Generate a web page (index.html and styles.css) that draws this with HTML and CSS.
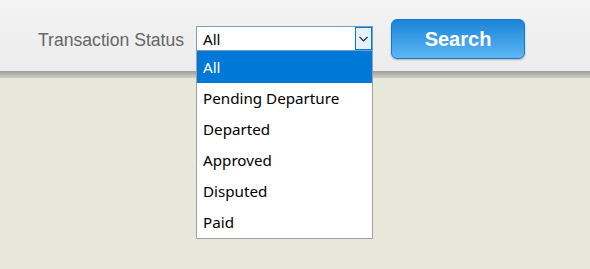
FILE: index.html
```html
<!DOCTYPE html>
<html lang="en">
<head>
    <meta charset="UTF-8">
    <meta name="viewport" content="width=device-width, initial-scale=1.0">
    <title>Transactions</title>
    <link rel="stylesheet" href="styles.css">
</head>
<body>
    <div class="toolbar">
        <label class="field-label">Transaction Status</label>
        <div class="select">
            <span class="select-value">All</span>
            <span class="select-arrow">
                <svg width="9" height="6" viewBox="0 0 9 6"><path d="M0.5 0.8 L4.5 4.8 L8.5 0.8" fill="none" stroke="#222" stroke-width="1.2"/></svg>
            </span>
            <ul class="options">
                <li class="selected">All</li>
                <li>Pending Departure</li>
                <li>Departed</li>
                <li>Approved</li>
                <li>Disputed</li>
                <li>Paid</li>
            </ul>
        </div>
        <button class="search-btn">Search</button>
    </div>
    <div class="shade"></div>
</body>
</html>
```

FILE: styles.css
```css
:root {
    --beige: #e8e8da;
    --blue: #0078d7;
}

body {
    margin: 0;
    background-color: var(--beige);
    font-family: 'Liberation Sans', Arial, sans-serif;
    height: 269px;
    overflow: hidden;
}

.toolbar {
    height: 71px;
    background: linear-gradient(#f3f3f3, #ececec);
    display: flex;
    align-items: flex-start;
    padding-left: 38px;
    box-sizing: border-box;
}

.field-label {
    color: #666;
    font-size: 17.6px;
    line-height: 20px;
    margin-top: 30px;
    width: 158px;
}

.select {
    position: relative;
    width: 177px;
    height: 25px;
    margin-top: 26px;
    box-sizing: border-box;
    border: 1px solid #7a9cbf;
    background: #fff;
    display: flex;
}

.select-value {
    flex: 1;
    font-family: 'Noto Sans', 'Open Sans', sans-serif;
    font-size: 15.2px;
    line-height: 24px;
    padding-left: 6px;
    color: #000;
}

.select-arrow {
    width: 15px;
    height: 21px;
    margin: 0 0 1px 0;
    border: 1px solid #0078d7;
    background: #e5f1fb;
    display: flex;
    align-items: center;
    justify-content: center;
}

.options {
    position: absolute;
    top: 24px;
    left: -1px;
    width: 177px;
    box-sizing: border-box;
    margin: 0;
    padding: 0;
    list-style: none;
    background: #fff;
    border: 1px solid #a0a0a0;
    border-top: none;
    z-index: 2;
}

.options li {
    font-family: 'Noto Sans', 'Open Sans', sans-serif;
    font-size: 15.2px;
    height: 31px;
    line-height: 31px;
    padding-left: 6px;
    color: #000;
}

.options li.selected {
    background: var(--blue);
    color: #fff;
    height: 32px;
    line-height: 32px;
}

.search-btn {
    margin-top: 19px;
    margin-left: 18px;
    width: 134px;
    height: 40px;
    border: 1px solid #1a78c8;
    border-radius: 6px;
    background: linear-gradient(#1a84d7, #5db7f5);
    color: #fff;
    font-family: 'Liberation Sans', Arial, sans-serif;
    font-weight: bold;
    font-size: 20px;
    box-shadow: 0 1px 2px rgba(0, 0, 0, 0.25);
    cursor: pointer;
}

.shade {
    height: 7px;
    background: linear-gradient(#9c9c9c, #cfcfc4);
}
```
